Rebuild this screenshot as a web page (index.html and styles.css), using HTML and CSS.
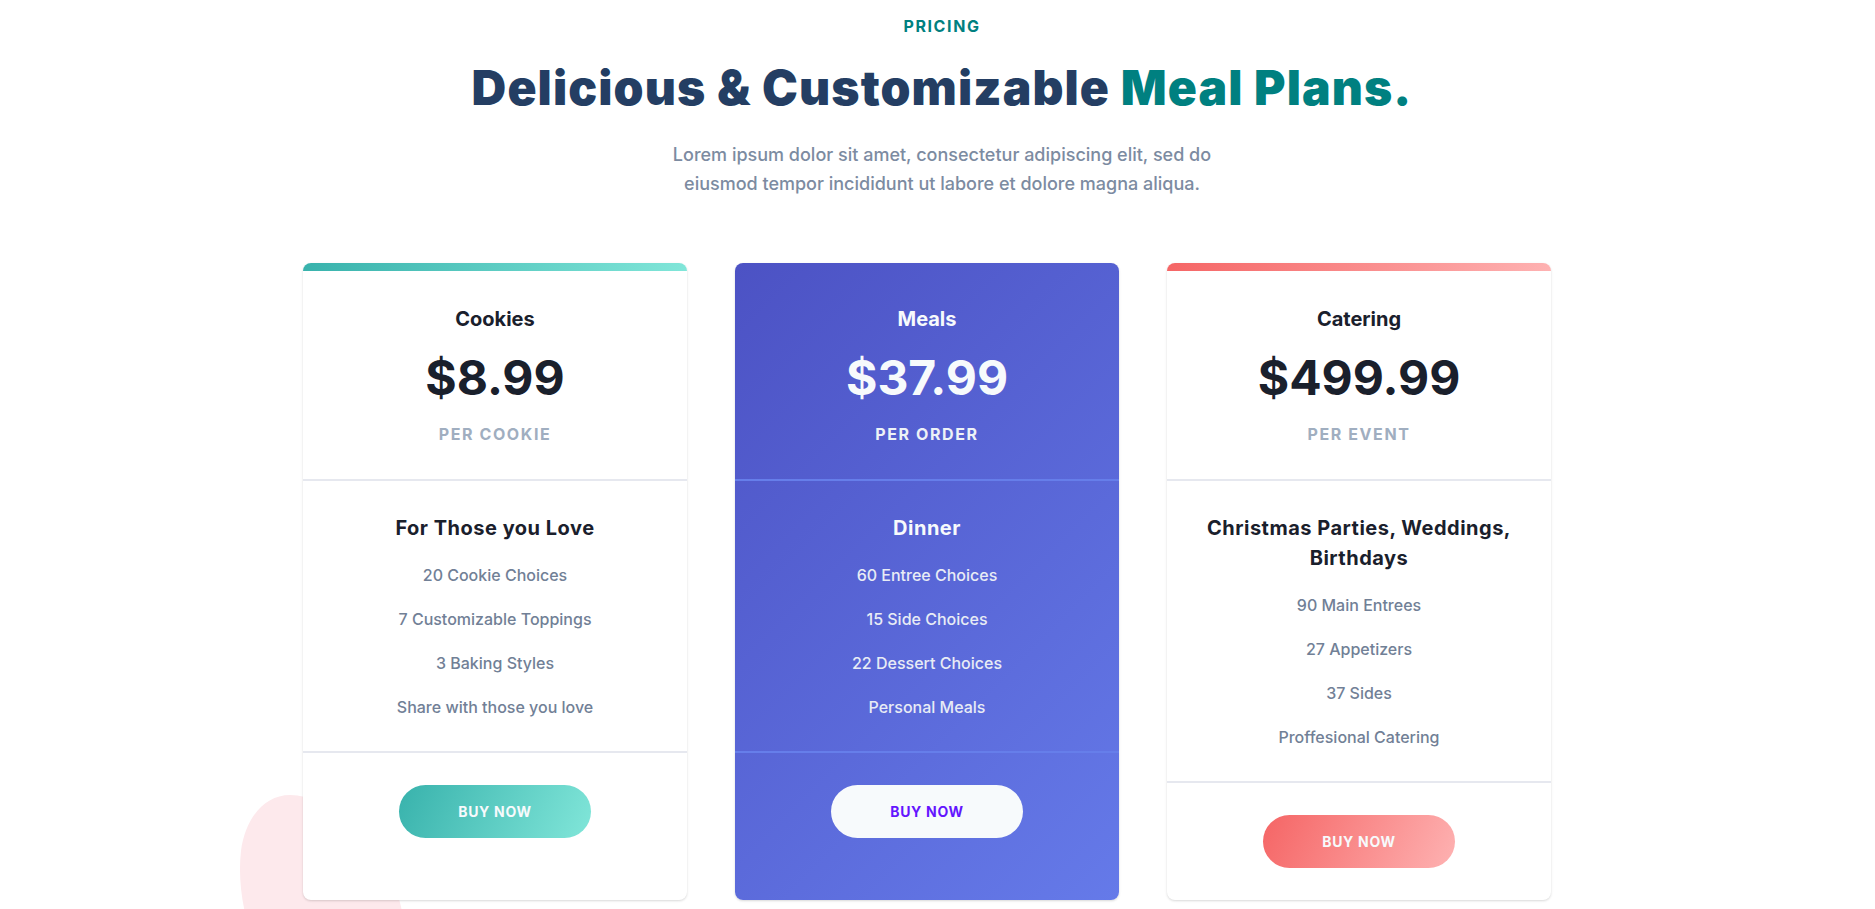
FILE: index.html
```html
<!DOCTYPE html>
<html lang="en">
<head>
<meta charset="utf-8">
<title>Pricing</title>
<link rel="stylesheet" href="styles.css">
</head>
<body>
<div class="page">
  <svg class="blob" width="200" height="140" viewBox="0 0 200 140" aria-hidden="true">
    <path d="M70 10 C110 10 150 55 168 88 C178 106 182 122 184 140 L28 140 C22 118 18 92 21 66 C25 34 44 10 70 10 Z" fill="#fde9ec"/>
  </svg>
  <header class="header">
    <h5 class="subheading">Pricing</h5>
    <h2 class="heading">Delicious &amp; Customizable <span class="highlight">Meal Plans.</span></h2>
    <p class="description">Lorem ipsum dolor sit amet, consectetur adipiscing elit, sed do eiusmod tempor incididunt ut labore et dolore magna aliqua.</p>
  </header>
  <div class="plans">
    <div class="plan">
      <div class="plan-bar bar-teal"></div>
      <div class="plan-header">
        <span class="name">Cookies</span>
        <span class="price">$8.99</span>
        <span class="duration">Per Cookie</span>
      </div>
      <div class="plan-features">
        <span class="feature main">For Those you Love</span>
        <span class="feature">20 Cookie Choices</span>
        <span class="feature">7 Customizable Toppings</span>
        <span class="feature">3 Baking Styles</span>
        <span class="feature">Share with those you love</span>
      </div>
      <div class="plan-action">
        <button class="buy btn-teal">Buy Now</button>
      </div>
    </div>
    <div class="plan featured">
      <div class="plan-header">
        <span class="name">Meals</span>
        <span class="price">$37.99</span>
        <span class="duration">Per Order</span>
      </div>
      <div class="plan-features">
        <span class="feature main">Dinner</span>
        <span class="feature">60 Entree Choices</span>
        <span class="feature">15 Side Choices</span>
        <span class="feature">22 Dessert Choices</span>
        <span class="feature">Personal Meals</span>
      </div>
      <div class="plan-action">
        <button class="buy btn-light">Buy Now</button>
      </div>
    </div>
    <div class="plan">
      <div class="plan-bar bar-red"></div>
      <div class="plan-header">
        <span class="name">Catering</span>
        <span class="price">$499.99</span>
        <span class="duration">Per Event</span>
      </div>
      <div class="plan-features">
        <span class="feature main">Christmas Parties, Weddings, Birthdays</span>
        <span class="feature">90 Main Entrees</span>
        <span class="feature">27 Appetizers</span>
        <span class="feature">37 Sides</span>
        <span class="feature">Proffesional Catering</span>
      </div>
      <div class="plan-action">
        <button class="buy btn-red">Buy Now</button>
      </div>
    </div>
  </div>
</div>
</body>
</html>
```

FILE: styles.css
```css
* { box-sizing: border-box; }
html, body { margin: 0; padding: 0; overflow: hidden; background: #ffffff; }
body {
  font-family: Inter, "Noto Sans", "Liberation Sans", sans-serif;
  line-height: 1.5;
  color: #1a202c;
}
.page {
  position: relative;
  height: 909px;
  padding-top: 14px;
}
.blob {
  position: absolute;
  left: 220px;
  top: 785px;
  z-index: 0;
}
.header {
  display: flex;
  flex-direction: column;
  align-items: center;
  padding-left: 9px;
  position: relative;
  z-index: 1;
}
.subheading {
  margin: 0 0 14px;
  font-size: 16px;
  line-height: 24px;
  font-weight: 700;
  letter-spacing: 0.1em;
  text-transform: uppercase;
  color: #008080;
}
.heading {
  margin: 0;
  font-size: 48px;
  line-height: 72px;
  font-weight: 900;
  letter-spacing: 0.023em;
  color: #243e63;
  text-align: center;
}
.highlight { color: #008080; }
.description {
  margin: 16px 0 0;
  max-width: 576px;
  font-size: 18px;
  line-height: 29.25px;
  font-weight: 500;
  color: #7c8ba1;
  text-align: center;
}
.plans {
  display: flex;
  justify-content: center;
  gap: 48px;
  padding-right: 21px;
  margin-top: 64px;
  position: relative;
  z-index: 1;
}
.plan {
  position: relative;
  width: 384px;
  display: flex;
  flex-direction: column;
  padding: 8px 32px 0;
  background: #ffffff;
  border-radius: 8px;
  box-shadow: 0 1px 3px 0 rgba(0,0,0,0.1), 0 1px 2px 0 rgba(0,0,0,0.06);
  text-align: center;
  color: #1a202c;
}
.plan-bar {
  position: absolute;
  top: 0;
  left: 0;
  right: 0;
  height: 8px;
  border-radius: 8px 8px 0 0;
}
.bar-teal, .btn-teal { background: linear-gradient(115deg, rgb(56,178,172) 0%, rgb(129,230,217) 100%); }
.bar-red, .btn-red { background: linear-gradient(115deg, rgb(245,101,101) 0%, rgb(254,178,178) 100%); }
.plan-header {
  display: flex;
  flex-direction: column;
  padding: 32px 0;
  line-height: 1.625;
}
.name { font-size: 20px; font-weight: 700; }
.price { font-size: 48px; font-weight: 700; margin: 4px 0; }
.duration {
  font-size: 16px;
  font-weight: 700;
  letter-spacing: 0.1em;
  text-transform: uppercase;
  color: #a0aec0;
}
.plan-features {
  display: flex;
  flex-direction: column;
  margin: 0 -32px;
  padding: 32px;
  border-top: 2px solid #e6e8ef;
  border-bottom: 2px solid #e6e8ef;
}
.feature {
  margin-top: 20px;
  font-size: 16px;
  line-height: 24px;
  font-weight: 500;
  color: #718096;
}
.feature.main {
  margin-top: 0;
  font-size: 20px;
  line-height: 30px;
  font-weight: 700;
  letter-spacing: 0.025em;
  color: #1a202c;
}
.plan-action {
  padding: 32px 64px;
}
.buy {
  display: block;
  width: 100%;
  padding: 16px 32px;
  border: 0;
  border-radius: 9999px;
  font-family: inherit;
  font-size: 14px;
  line-height: 21px;
  font-weight: 700;
  letter-spacing: 0.05em;
  text-transform: uppercase;
  color: #f7fafc;
  cursor: pointer;
}
.featured {
  background: linear-gradient(135deg, rgb(76,82,196) 0%, rgb(101,122,233) 100%);
  color: #f7fafc;
}
.featured .duration { color: #edf2f7; }
.featured .plan-features { border-color: #667eea; }
.featured .feature { color: #e8ecf5; }
.featured .feature.main { color: #f7fafc; }
.btn-light { background: #f7fafc; color: #6415ff; }
```
